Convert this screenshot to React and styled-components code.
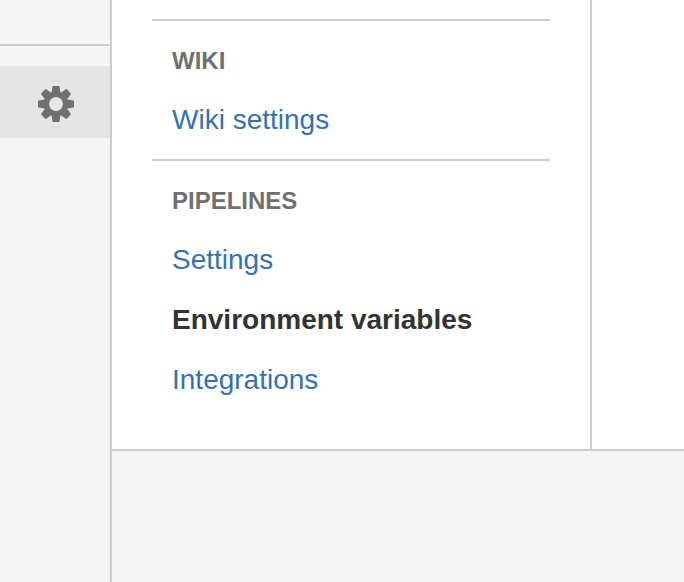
import React from "react";
import styled, { createGlobalStyle } from "styled-components";

const GlobalStyle = createGlobalStyle`
  * { box-sizing: border-box; }
  body {
    margin: 0;
    background: #f4f4f4;
    font-family: "Liberation Sans", Arial, sans-serif;
    overflow: hidden;
  }
`;

const Page = styled.div`
  display: flex;
  height: 582px;
`;

const Sidebar = styled.aside`
  width: 112px;
  flex-shrink: 0;
  background: #f5f5f5;
  border-right: 2px solid #ccc;
`;

const SidebarGroup = styled.div`
  height: 46px;
  border-bottom: 2px solid #ccc;
`;

const SidebarButton = styled.a`
  display: flex;
  align-items: center;
  justify-content: center;
  height: 72px;
  margin-top: 20px;
  padding: 4px 0 0 2px;
  background: #e6e6e6;
  color: #707070;
`;

const Main = styled.main`
  flex: 1;
`;

const Panel = styled.div`
  display: flex;
  height: 451px;
  background: #fff;
  border-bottom: 2px solid #ccc;
`;

const SettingsNav = styled.nav`
  width: 480px;
  padding: 19px 40px 0;
  border-right: 2px solid #ccc;
`;

const Section = styled.section`
  display: flex;
  flex-direction: column;
  gap: 20px;
  padding: 21px 20px 19px;
  border-top: 2px solid #ccc;
`;

const SectionTitle = styled.h2`
  margin: 0;
  font-size: 24px;
  line-height: 38px;
  font-weight: 700;
  color: #707070;
`;

const NavLink = styled.a`
  font-size: 28px;
  line-height: 40px;
  white-space: nowrap;
  font-weight: ${(p) => (p.$current ? 700 : 400)};
  color: ${(p) => (p.$current ? "#333" : "#3572b0")};
`;

const toothAngles = [0, 45, 90, 135, 180, 225, 270, 315];

function GearIcon() {
  return (
    <svg width="36" height="36" viewBox="-18 -18 36 36" fill="currentColor">
      {toothAngles.map((a) => (
        <path
          key={a}
          transform={`rotate(${a})`}
          d="M-4.7-10 L-3.5-17.4 Q-3.4-18-2.8-18 H2.8 Q3.4-18 3.5-17.4 L4.7-10Z"
        />
      ))}
      <circle r="9.4" fill="none" stroke="currentColor" strokeWidth="5" />
    </svg>
  );
}

const sections = [
  { title: "WIKI", links: ["Wiki settings"] },
  {
    title: "PIPELINES",
    links: ["Settings", "Environment variables", "Integrations"],
  },
];

export default function App() {
  const current = "Environment variables";
  return (
    <>
      <GlobalStyle />
      <Page>
        <Sidebar>
          <SidebarGroup />
          <SidebarButton aria-label="Settings">
            <GearIcon />
          </SidebarButton>
        </Sidebar>
        <Main>
          <Panel>
            <SettingsNav>
              {sections.map((s) => (
                <Section key={s.title}>
                  <SectionTitle>{s.title}</SectionTitle>
                  {s.links.map((l) => (
                    <NavLink key={l} $current={l === current}>
                      {l}
                    </NavLink>
                  ))}
                </Section>
              ))}
            </SettingsNav>
          </Panel>
        </Main>
      </Page>
    </>
  );
}
